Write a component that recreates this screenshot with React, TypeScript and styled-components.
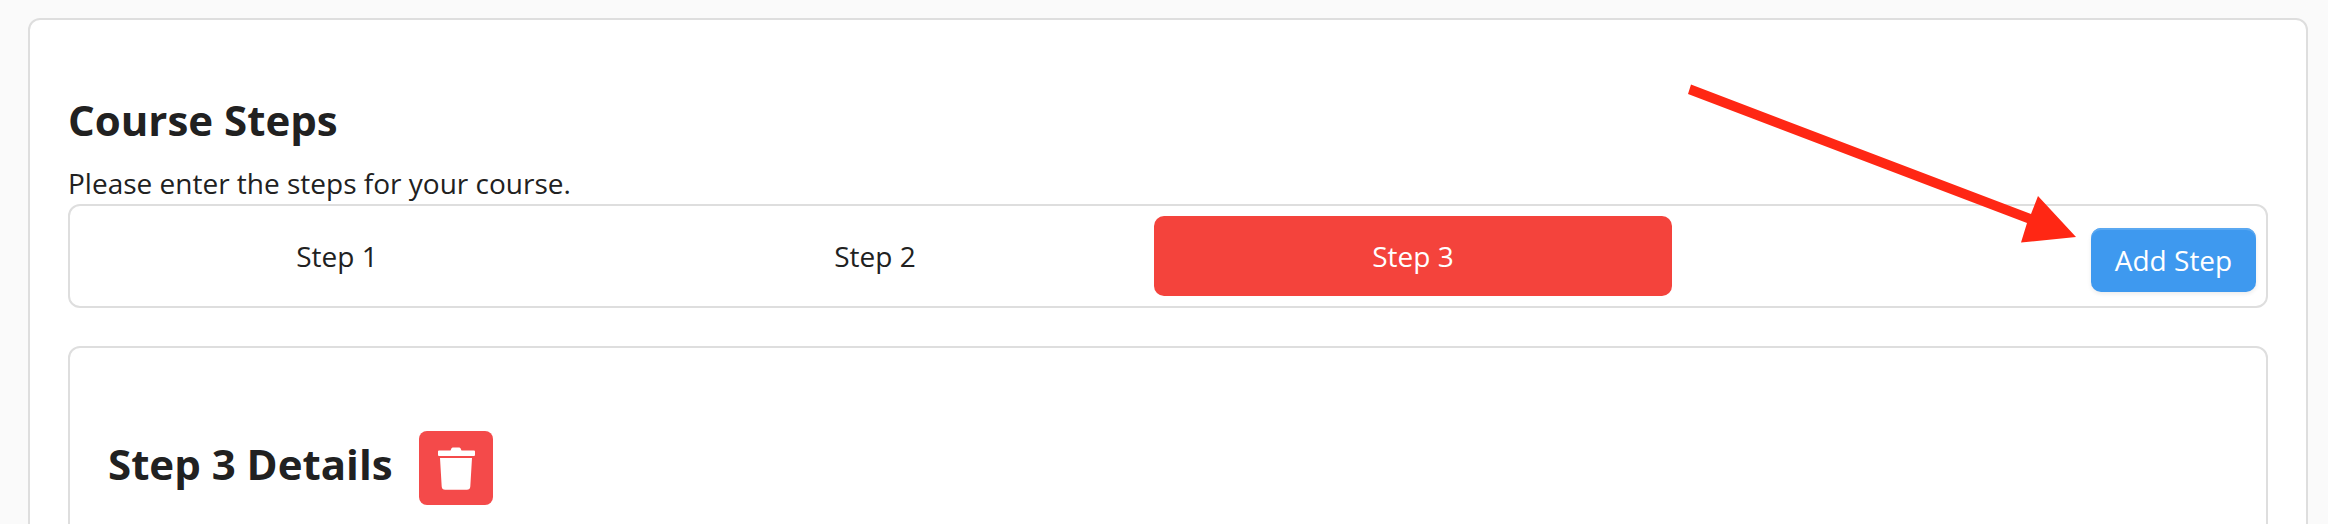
import React from "react";
import styled, { createGlobalStyle } from "styled-components";

const GlobalStyle = createGlobalStyle`
  html, body {
    margin: 0;
    padding: 0;
    height: 524px;
    overflow: hidden;
    background: #fafafa;
    font-family: "Open Sans", sans-serif;
    color: #212121;
  }
`;

const Page = styled.div`
  position: relative;
  box-sizing: border-box;
  height: 524px;
  padding: 18px 20px 0 28px;
  overflow: hidden;
`;

const Card = styled.section`
  box-sizing: border-box;
  height: 600px;
  padding: 74px 38px 0;
  background: #fff;
  border: 2px solid #dedede;
  border-radius: 12px;
`;

const Title = styled.h2`
  margin: 0;
  font-size: 42px;
  line-height: 52px;
  font-weight: 700;
`;

const DetailsTitle = styled(Title)`
  margin-bottom: 8px;
`;

const Hint = styled.p`
  margin: 22px 0 6px;
  font-size: 28px;
  line-height: 30px;
`;

const StepBar = styled.div`
  box-sizing: border-box;
  display: flex;
  align-items: flex-start;
  gap: 20px;
  height: 104px;
  padding: 10px 10px 0 8px;
  background: #fff;
  border: 2px solid #dedede;
  border-radius: 12px;
`;

const StepTab = styled.div<{ $active?: boolean }>`
  display: flex;
  align-items: center;
  justify-content: center;
  width: 518px;
  height: 80px;
  font-size: 28px;
  border-radius: 10px;
  color: ${(p) => (p.$active ? "#fff" : "#212121")};
  background: ${(p) => (p.$active ? "#f4433c" : "transparent")};
`;

const AddButton = styled.button`
  width: 165px;
  height: 64px;
  margin: 12px 0 0 auto;
  padding: 0;
  font-family: inherit;
  font-size: 28px;
  color: #fff;
  background: #3e99ef;
  border: none;
  border-radius: 10px;
  box-shadow: inset 0 2px 0 #5aa8f1, 0 2px 4px rgba(0, 0, 0, 0.08);
`;

const DetailsCard = styled.div`
  box-sizing: border-box;
  height: 300px;
  margin-top: 38px;
  padding: 83px 38px 0;
  background: #fff;
  border: 2px solid #dedede;
  border-radius: 12px;
`;

const DetailsHeader = styled.div`
  display: flex;
  align-items: center;
  gap: 26px;
`;

const DeleteButton = styled.button`
  display: flex;
  align-items: center;
  justify-content: center;
  width: 74px;
  height: 74px;
  padding: 0;
  background: #f44a4a;
  border: none;
  border-radius: 8px;
`;

const Annotation = styled.svg`
  position: absolute;
  top: 0;
  left: 0;
  pointer-events: none;
`;

const TrashIcon = () => (
  <svg width="74" height="74" viewBox="0 0 74 74" fill="#fff">
    <path d="M20 19.500h11.500l1-2.200a1.500 1.500 0 0 1 1.300-.8h6.400a1.500 1.500 0 0 1 1.300.8l1 2.200H55a1 1 0 0 1 1 1V24a1 1 0 0 1-1 1H20a1 1 0 0 1-1-1v-3.500a1 1 0 0 1 1-1z" />
    <path d="M21 27h32l-1.700 28.500a3.500 3.500 0 0 1-3.500 3.200H26.200a3.500 3.500 0 0 1-3.500-3.200z" />
  </svg>
);

const App: React.FC = () => {
  return (
    <Page>
      <GlobalStyle />
      <Card>
        <Title>Course Steps</Title>
        <Hint>Please enter the steps for your course.</Hint>
        <StepBar>
          <StepTab>Step 1</StepTab>
          <StepTab>Step 2</StepTab>
          <StepTab $active>Step 3</StepTab>
          <AddButton>Add Step</AddButton>
        </StepBar>
        <DetailsCard>
          <DetailsHeader>
            <DetailsTitle>Step 3 Details</DetailsTitle>
            <DeleteButton>
              <TrashIcon />
            </DeleteButton>
          </DetailsHeader>
        </DetailsCard>
      </Card>
      <Annotation width="2328" height="524" viewBox="0 0 2328 524">
        <polygon
          points="1691,84.500 2031,214 2038,196 2076,237 2021,242.500 2027,223 1688,94"
          fill="#ff2714"
        />
      </Annotation>
    </Page>
  );
};

export default App;
